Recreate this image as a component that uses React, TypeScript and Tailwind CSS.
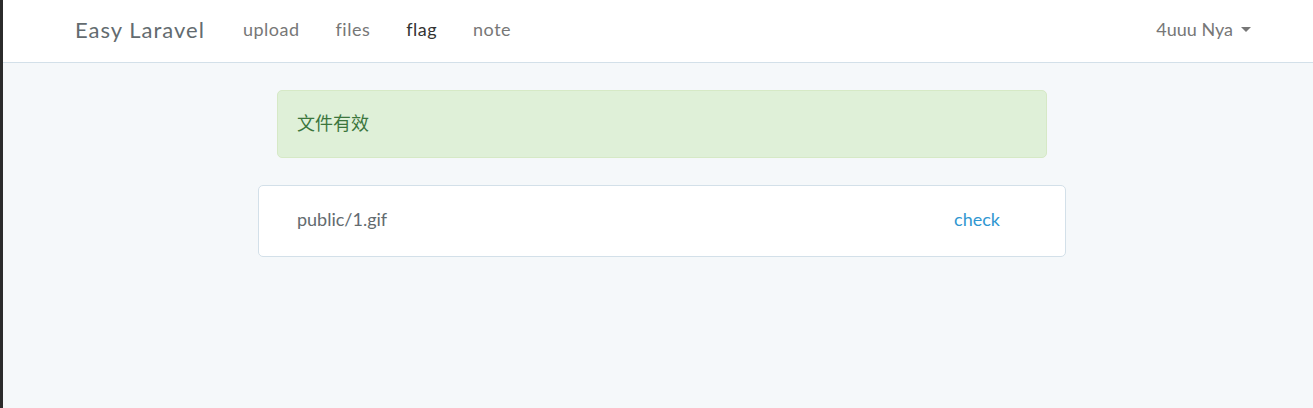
export default function App() {
  const links = ["upload", "files", "flag", "note"];

  return (
    <div
      className="flex min-h-[408px] border-l-[3px] border-[#2b2b2b] bg-[#f5f8fa] text-[#636b6f]"
      style={{ fontFamily: "Lato, 'Noto Sans CJK SC', sans-serif" }}
    >
      <div className="flex-1">
        {/* Navbar */}
        <nav className="flex h-[63px] items-center justify-between border-b border-[#d3e0e9] bg-white pb-[4px] pl-[72px] pr-[62px]">
          <div className="flex items-center">
            <span className="text-[22px] tracking-[1px] text-[#636b6f]">Easy Laravel</span>
            <ul className="ml-[20px] flex items-center">
              {links.map((l) => (
                <li
                  key={l}
                  className={`px-[18px] text-[18px] tracking-[0.5px] ${l === "flag" ? "text-[#333]" : "text-[#777]"}`}
                >
                  {l}
                </li>
              ))}
            </ul>
          </div>
          <div className="flex items-center gap-[8px] text-[18px] text-[#777]">
            <span>4uuu Nya</span>
            <span className="h-0 w-0 border-x-[5px] border-t-[5px] border-x-transparent border-t-[#777]" />
          </div>
        </nav>

        {/* Alert */}
        <div className="ml-[274px] mt-[27px] flex h-[68px] w-[770px] items-center rounded-[5px] border border-[#d6e9c6] bg-[#dff0d8] px-[19px] pb-[2px] text-[18px] text-[#3c763d]">
          文件有效
        </div>

        {/* Panel */}
        <div className="ml-[255px] mt-[27px] flex h-[72px] w-[808px] items-start justify-between rounded-[5px] border border-[#d3e0e9] bg-white pl-[38px] pr-[65px] pt-[20px] text-[18px]">
          <span className="text-[#636b6f]">public/1.gif</span>
          <span className="text-[#3097d1]">check</span>
        </div>
      </div>
    </div>
  );
}
